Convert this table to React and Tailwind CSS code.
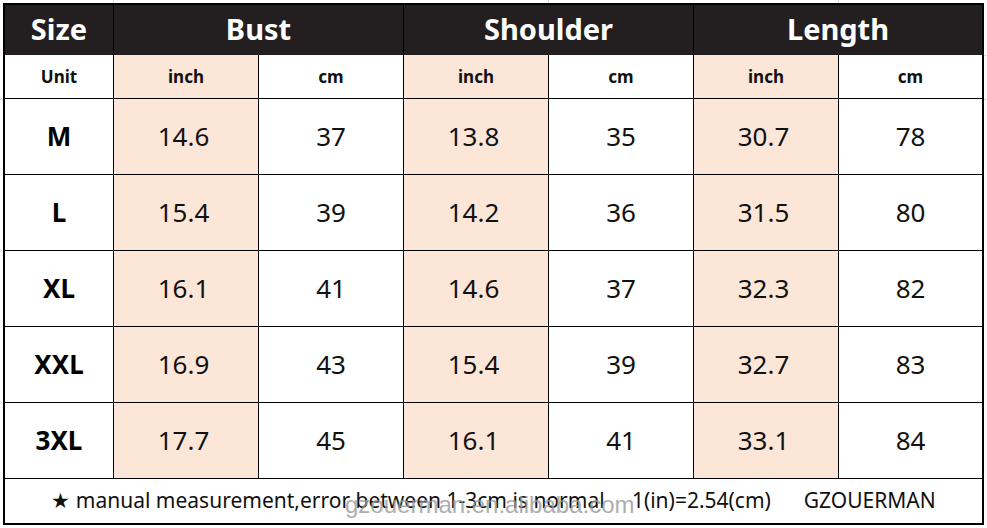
import React from "react";

const rows = [
  ["M", "14.6", "37", "13.8", "35", "30.7", "78"],
  ["L", "15.4", "39", "14.2", "36", "31.5", "80"],
  ["XL", "16.1", "41", "14.6", "37", "32.3", "82"],
  ["XXL", "16.9", "43", "15.4", "39", "32.7", "83"],
  ["3XL", "17.7", "45", "16.1", "41", "33.1", "84"],
];

const font = { fontFamily: '"Noto Sans", "Open Sans", Arial, sans-serif' };

export default function App() {
  return (
    <div className="relative w-[987px] h-[528px] bg-white overflow-hidden" style={font}>
      <div className="absolute left-[113px] top-0 h-[3px] w-px bg-[#d9d9d9]" />
      <div className="absolute left-[548px] top-0 h-[3px] w-px bg-[#d9d9d9]" />
      <div className="absolute left-[838px] top-0 h-[3px] w-px bg-[#d9d9d9]" />
      <div className="absolute right-0 top-[55px] w-[3px] h-px bg-[#d9d9d9]" />
      <div className="absolute right-0 top-[99px] w-[3px] h-px bg-[#d9d9d9]" />
      <div className="absolute left-0 top-[99px] w-[3px] h-px bg-[#d9d9d9]" />
      <div className="ml-[3px] mt-[3px] w-[981px] border-2 border-black">
        <div className="grid grid-cols-[109px_145px_145px_145px_145px_145px_143px]">
          {/* header */}
          <div className="h-[50px] pb-[4px] bg-[#231f20] border-r border-black flex items-center justify-center text-white font-bold text-[29px] leading-none">Size</div>
          <div className="col-span-2 h-[50px] pb-[4px] bg-[#231f20] border-r border-black flex items-center justify-center text-white font-bold text-[29px] leading-none">Bust</div>
          <div className="col-span-2 h-[50px] pb-[4px] bg-[#231f20] border-r border-black flex items-center justify-center text-white font-bold text-[29px] leading-none">Shoulder</div>
          <div className="col-span-2 h-[50px] pb-[4px] bg-[#231f20] flex items-center justify-center text-white font-bold text-[29px] leading-none">Length</div>
          {/* unit row */}
          <div className="h-[44px] border-r border-b border-black flex items-center justify-center font-bold text-[17px] text-[#111]">Unit</div>
          {["inch", "cm", "inch", "cm", "inch", "cm"].map((u, i) => (
            <div
              key={i}
              className={
                "h-[44px] border-b border-black flex items-center justify-center font-bold text-[17px] text-[#111] " +
                (i % 2 === 0 ? "bg-[#fbe6d8] " : "bg-white ") +
                (i < 5 ? "border-r" : "")
              }
            >
              {u}
            </div>
          ))}
          {rows.map((r, ri) => (
            <React.Fragment key={ri}>
              <div className="h-[76px] border-r border-b border-black flex items-center justify-center font-bold text-[26px] text-black">{r[0]}</div>
              {r.slice(1).map((v, i) => (
                <div
                  key={i}
                  className={
                    "h-[76px] border-b border-black flex items-center justify-center text-[26px] text-[#111] " +
                    (i % 2 === 0 ? "bg-[#fbe6d8] pr-[5px] " : "bg-white ") +
                    (i < 5 ? "border-r" : "")
                  }
                >
                  {v}
                </div>
              ))}
            </React.Fragment>
          ))}
          <div className="col-span-7 h-[44px] flex items-center justify-center text-[21px] text-[#111] whitespace-pre">
            {"★ manual measurement,error between 1-3cm is normal     1(in)=2.54(cm)      GZOUERMAN"}
          </div>
        </div>
      </div>
      <div
        className="absolute left-[345px] top-[493px] text-[24px] leading-none text-[#9a9a9a] opacity-80 pointer-events-none"
        style={{ fontFamily: '"Liberation Sans", Arial, sans-serif' }}
      >
        gzouerman.en.alibaba.com
      </div>
    </div>
  );
}
